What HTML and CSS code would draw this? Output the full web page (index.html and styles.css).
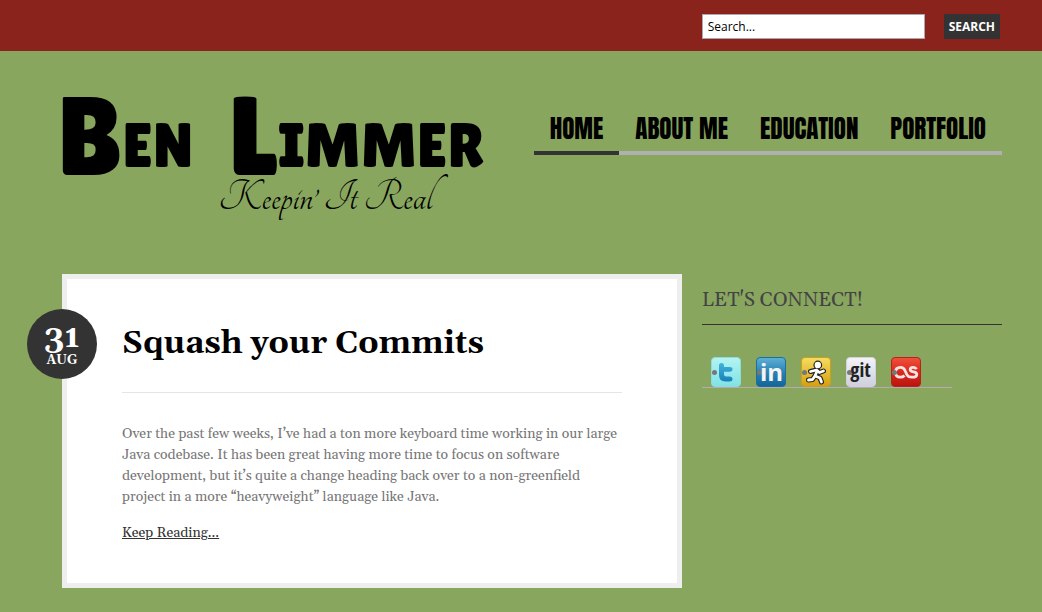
FILE: index.html
```html
<!DOCTYPE html>
<html lang="en">
<head>
<meta charset="utf-8">
<meta name="viewport" content="width=device-width, initial-scale=1">
<title>Ben Limmer</title>
<link rel="stylesheet" href="styles.css">
</head>
<body>
<div class="topbar">
  <form class="search" role="search">
    <input class="search-field" type="text" aria-label="Search" value="Search...">
    <button class="search-button" type="submit">SEARCH</button>
  </form>
</div>

<header class="header wrap">
  <a class="brand" href="#">
    <h1 class="brand-name"><span><span class="initial">B</span>EN</span> <span><span class="initial">L</span>IMMER</span></h1>
    <p class="brand-tagline">Keepin’ It Real</p>
  </a>
  <nav class="nav" aria-label="Main">
    <a class="nav-link nav-link-current" href="#" aria-current="page">HOME</a>
    <a class="nav-link" href="#">ABOUT ME</a>
    <a class="nav-link" href="#">EDUCATION</a>
    <a class="nav-link" href="#">PORTFOLIO</a>
  </nav>
</header>

<div class="columns wrap">
  <main>
    <article class="post">
      <time class="post-date" datetime="08-31"><span class="post-day">31</span><span class="post-month">AUG</span></time>
      <h2 class="post-title">Squash your Commits</h2>
      <p class="post-text">Over the past few weeks, I’ve had a ton more keyboard time working in our large Java codebase. It has been great having more time to focus on software development, but it’s quite a change heading back over to a non-greenfield project in a more “heavyweight” language like Java.</p>
      <a class="post-more" href="#">Keep Reading...</a>
    </article>
  </main>

  <aside class="sidebar">
    <h3 class="sidebar-title">LET'S CONNECT!</h3>
    <div class="social">
      <a class="social-link" href="#" aria-label="Twitter">
        <svg viewBox="0 0 30 30" width="30" height="30">
          <defs>
            <linearGradient id="tw" x2="0" y2="1"><stop offset="0" stop-color="#b4f3f2"/><stop offset="1" stop-color="#7fe3e6"/></linearGradient>
            <linearGradient id="twt" x2="0" y2="1"><stop offset="0" stop-color="#3fb4dc"/><stop offset="1" stop-color="#1a7fb8"/></linearGradient>
          </defs>
          <rect x=".5" y=".5" width="29" height="29" rx="3.5" fill="url(#tw)" stroke="#8cdcda"/>
          <path d="M8 8.500Q8 6 10.500 6Q13 6 13 8.500V10H18.500Q21.500 10 21.500 12.300Q21.500 14.700 18.500 14.700H13V17Q13 19.500 15.500 19.500H18.500Q21.500 19.500 21.500 22Q21.500 24.500 18.500 24.500H14.500Q8 24.500 8 18Z" fill="url(#twt)"/>
          <circle cx="3.500" cy="15.500" r="2.500" fill="#777"/>
        </svg>
      </a>
      <a class="social-link" href="#" aria-label="LinkedIn">
        <svg viewBox="0 0 30 30" width="30" height="30">
          <defs><linearGradient id="li" x2="0" y2="1"><stop offset="0" stop-color="#5fb0d6"/><stop offset=".5" stop-color="#2b83b4"/><stop offset="1" stop-color="#126598"/></linearGradient></defs>
          <rect x=".5" y=".5" width="29" height="29" rx="3.5" fill="url(#li)" stroke="#1d6f9f"/>
          <circle cx="3.500" cy="15.500" r="2.500" fill="#777"/>
          <text class="icon-in" x="15.500" y="23.500" text-anchor="middle">in</text>
        </svg>
      </a>
      <a class="social-link" href="#" aria-label="AIM">
        <svg viewBox="0 0 30 30" width="30" height="30">
          <defs><linearGradient id="aim" x2="0" y2="1"><stop offset="0" stop-color="#f7dc62"/><stop offset="1" stop-color="#d3a00d"/></linearGradient></defs>
          <rect x=".5" y=".5" width="29" height="29" rx="3.5" fill="url(#aim)" stroke="#c99f1c"/>
          <circle cx="3.500" cy="15.500" r="2.500" fill="#777"/>
          <g fill="none" stroke="#222" stroke-width="5" stroke-linecap="round" stroke-linejoin="round">
            <path d="M9.500 14.500L15.500 13L18.500 15.500L22.500 14"/>
            <path d="M16 14L14 19L19 21L20.500 25"/>
            <path d="M14 19L11.500 22.500L7.500 23"/>
          </g>
          <circle cx="16.800" cy="8" r="4.400" fill="#222"/>
          <g fill="none" stroke="#fff" stroke-width="2.800" stroke-linecap="round" stroke-linejoin="round">
            <path d="M9.500 14.500L15.500 13L18.500 15.500L22.500 14"/>
            <path d="M16 14L14 19L19 21L20.500 25"/>
            <path d="M14 19L11.500 22.500L7.500 23"/>
          </g>
          <circle cx="16.800" cy="8" r="3.200" fill="#fff"/>
        </svg>
      </a>
      <a class="social-link" href="#" aria-label="Git">
        <svg viewBox="0 0 30 30" width="30" height="30">
          <defs><linearGradient id="git" x2="0" y2="1"><stop offset="0" stop-color="#f4f4f8"/><stop offset="1" stop-color="#cfcfdd"/></linearGradient></defs>
          <rect x=".5" y=".5" width="29" height="29" rx="3.5" fill="url(#git)" stroke="#d2d2dc"/>
          <circle cx="3.500" cy="15.500" r="2.500" fill="#777"/>
          <text class="icon-git" x="14.500" y="20" text-anchor="middle">git</text>
        </svg>
      </a>
      <a class="social-link" href="#" aria-label="Last.fm">
        <svg viewBox="0 0 30 30" width="30" height="30">
          <defs><linearGradient id="fm" x2="0" y2="1"><stop offset="0" stop-color="#f0513c"/><stop offset=".5" stop-color="#d9291d"/><stop offset="1" stop-color="#b8150f"/></linearGradient></defs>
          <rect x=".5" y=".5" width="29" height="29" rx="3.5" fill="url(#fm)" stroke="#b5241b"/>
          <path d="M13.500 18.500Q12 20.200 9.300 20.200Q4.500 20.200 4.500 15.300Q4.500 10.400 9.500 10.400Q12.700 10.400 14 13.500L15.800 17.500Q17 20.200 21 20.200Q25.800 20.200 25.800 17.400Q25.800 15.500 22.500 14.900Q19.200 14.400 19.200 12.500Q19.200 10.400 22 10.400Q24.500 10.400 25.300 12.200" fill="none" stroke="#f7e4e2" stroke-width="2.800"/>
          <circle cx="3.500" cy="15.500" r="2.500" fill="#777"/>
        </svg>
      </a>
    </div>
  </aside>
</div>
</body>
</html>
```
FILE: styles.css
```css
* {
  box-sizing: border-box;
}

body {
  margin: 0;
  background: #89a65f;
  color: #333;
  font-family: Gelasio, Georgia, "Liberation Serif", serif;
  font-size: 14px;
  line-height: 21px;
}

a {
  color: inherit;
}

.wrap {
  padding-left: 62px;
  padding-right: 40px;
}

.topbar {
  background: #8a231b;
}

.search {
  display: flex;
  justify-content: flex-end;
  gap: 19px;
  padding: 14px 42px 12px;
}

.search-field {
  width: 223px;
  height: 25px;
  padding: 0 5px;
  border: 1px solid #aaa;
  background: #fff;
  color: #000;
  font: 12px "Open Sans", sans-serif;
}

.search-button {
  height: 25px;
  padding: 0 5px;
  border: 0;
  background: #333;
  color: #fff;
  font: bold 12px "Open Sans", sans-serif;
}

.header {
  display: flex;
  justify-content: space-between;
  align-items: flex-start;
  padding-top: 40px;
  padding-bottom: 50px;
}

.brand {
  color: #000;
  text-decoration: none;
}

.brand-name {
  display: flex;
  gap: 36px;
  margin: 0 0 0 -6px;
  font: 62px/90px "Lilita One", sans-serif;
}

.initial {
  font-size: 112px;
  vertical-align: -8px;
}

.brand-tagline {
  margin: -19px 52px 0 0;
  font: 46px/52px Tangerine, "Dancing Script", cursive;
  text-align: right;
}

.nav {
  display: flex;
  padding-top: 18px;
}

.nav-link {
  padding: 0 16px 2px;
  border-bottom: 4px solid #b0b0b0;
  color: #000;
  font: 25px/40px Anton, Impact, sans-serif;
  text-decoration: none;
}

.nav-link-current {
  border-color: #333;
}

.columns {
  display: grid;
  grid-template-columns: minmax(0, 1fr) 300px;
  gap: 20px;
  align-items: start;
}

.post {
  position: relative;
  padding: 40px 55px 39px;
  border: 5px solid #eee;
  background: #fff;
}

.post-date {
  position: absolute;
  top: 30px;
  left: -40px;
  width: 70px;
  height: 70px;
  padding-top: 14px;
  border-radius: 50%;
  background: #333;
  color: #fff;
  font-weight: bold;
  text-align: center;
}

.post-day,
.post-month {
  display: block;
}

.post-day {
  font-size: 32px;
  line-height: 30px;
}

.post-month {
  font-size: 13px;
  line-height: 14px;
}

.post-title {
  margin: 0 0 31px;
  padding-bottom: 23px;
  border-bottom: 1px solid #e5e5e5;
  color: #000;
  font-size: 32px;
  line-height: 50px;
}

.post-text {
  margin: 0 0 15px;
  color: #777;
}

.sidebar-title {
  margin: 0 0 32px;
  padding: 11px 0 9px;
  border-bottom: 1px solid #333;
  color: #444;
  font-size: 20px;
  font-weight: normal;
  line-height: 30px;
}

.social {
  display: flex;
  gap: 15px;
  margin-right: 50px;
  padding-left: 9px;
  border-bottom: 1px solid #b4abb4;
}

.social-link,
.social-link svg {
  display: block;
  overflow: visible;
}

.icon-in {
  fill: #f4f4f4;
  font: bold 24px "Open Sans", sans-serif;
}

.icon-git {
  fill: #222;
  font: bold 20px "Open Sans Condensed", "Open Sans", sans-serif;
}
```
